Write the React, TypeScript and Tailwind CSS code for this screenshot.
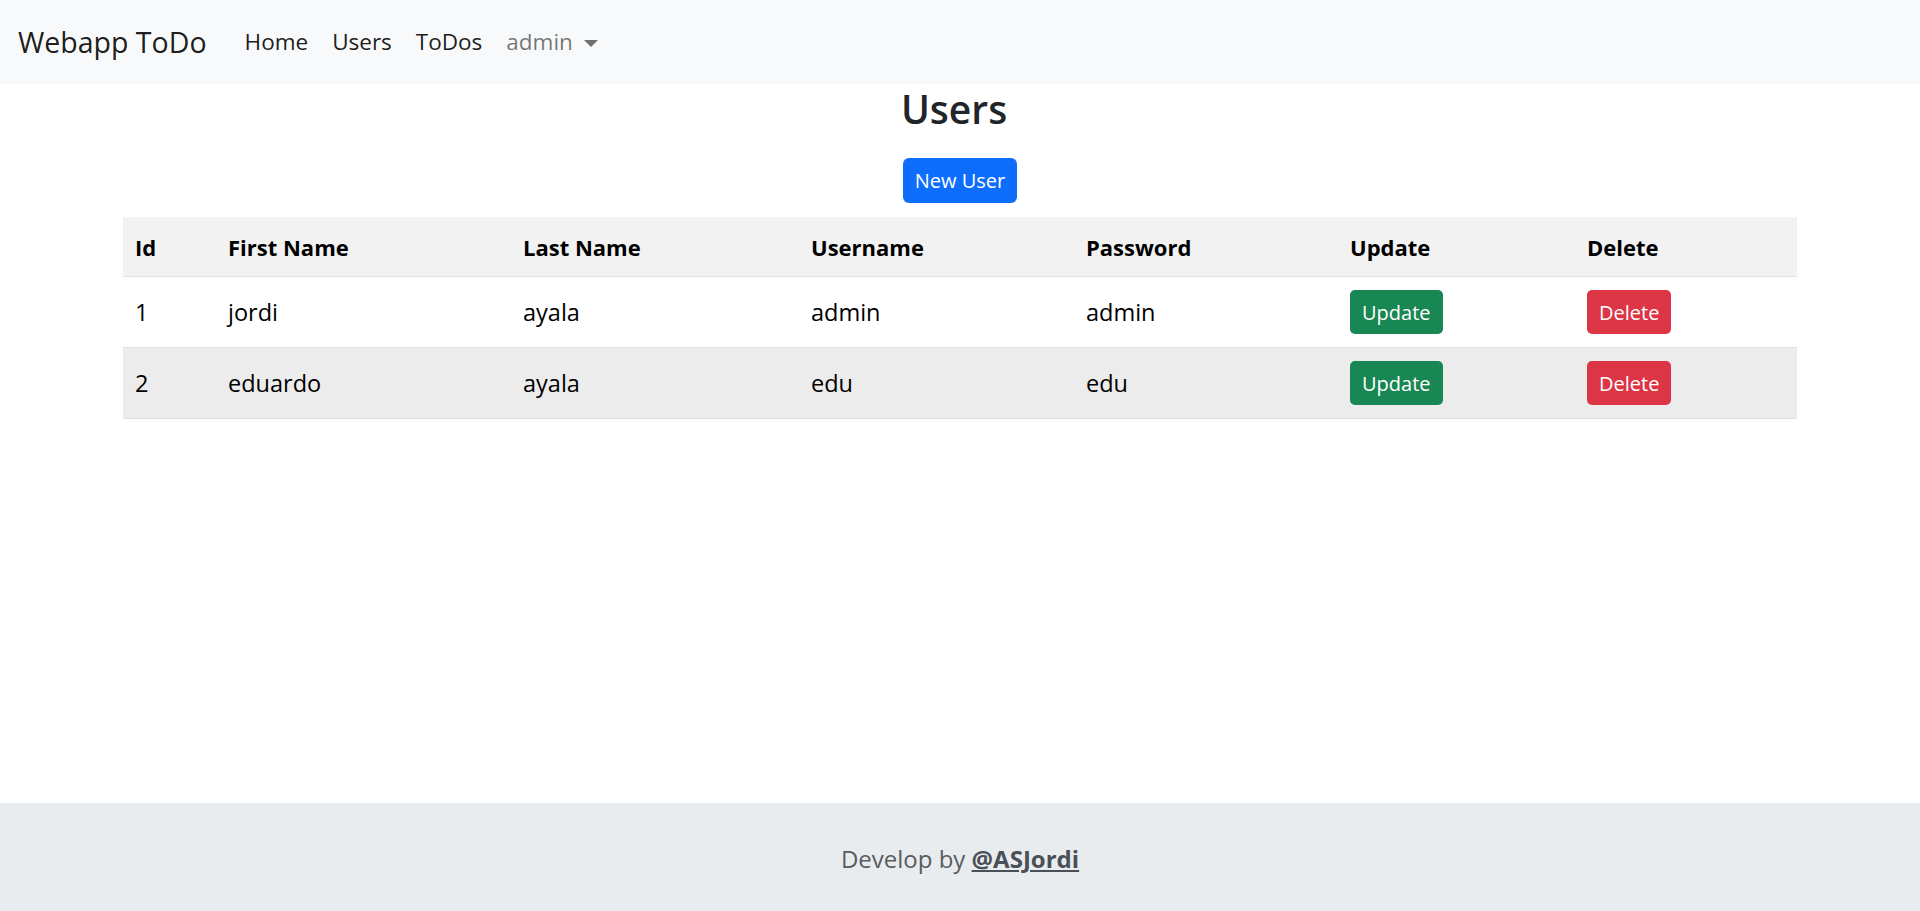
const users = [
  { id: 1, firstName: 'jordi', lastName: 'ayala', username: 'admin', password: 'admin' },
  { id: 2, firstName: 'eduardo', lastName: 'ayala', username: 'edu', password: 'edu' },
];

function Navbar() {
  return (
    <nav className="h-[84px] bg-[#f8f9fa] flex items-center px-[18px]">
      <a href="#" className="text-[28.5px] leading-[45px] text-black/90 mr-[26px]">
        Webapp ToDo
      </a>
      <ul className="flex items-center text-[22.5px] leading-[36px]">
        <li><a href="#" className="block px-[12px] text-black/90">Home</a></li>
        <li><a href="#" className="block px-[12px] text-black/90">Users</a></li>
        <li><a href="#" className="block px-[12px] text-black/90">ToDos</a></li>
        <li>
          <a href="#" className="flex items-center px-[12px] text-black/55">
            admin
            {/* dropdown caret */}
            <span className="ml-[11px] mt-[2px] w-0 h-0 border-t-[7px] border-t-current border-x-[7px] border-x-transparent" />
          </a>
        </li>
      </ul>
    </nav>
  );
}

function Btn({ color, children }: { color: string; children: string }) {
  return (
    <button className={`h-[44px] px-[12px] rounded-[5px] text-white text-[20px] leading-[31px] ${color}`}>
      {children}
    </button>
  );
}

export default function App() {
  return (
    <div className="min-h-screen flex flex-col bg-white font-['Open_Sans',sans-serif]">
      <Navbar />

      <main className="w-[1710px] mx-auto px-[18px]">
        <h3 className="text-center text-[39px] leading-[50px] font-semibold text-[#212529] mb-[24px] pr-[12px]">Users</h3>
        <div className="flex justify-center mb-[14px]">
          <button className="h-[45px] px-[12px] rounded-[6px] bg-[#0d6efd] text-white text-[20px] leading-[31px]">
            New User
          </button>
        </div>

        <table className="w-full table-fixed border-collapse text-[23.5px] leading-[36px] text-black">
          <thead>
            <tr className="bg-[#f2f2f2] border-b border-[#dee2e6] text-left text-[22px]">
              <th className="w-[93px] px-[12px] pt-[12px] pb-[11px] font-bold">Id</th>
              <th className="w-[295px] px-[12px] pt-[12px] pb-[11px] font-bold">First Name</th>
              <th className="w-[288px] px-[12px] pt-[12px] pb-[11px] font-bold">Last Name</th>
              <th className="w-[275px] px-[12px] pt-[12px] pb-[11px] font-bold">Username</th>
              <th className="w-[264px] px-[12px] pt-[12px] pb-[11px] font-bold">Password</th>
              <th className="w-[237px] px-[12px] pt-[12px] pb-[11px] font-bold">Update</th>
              <th className="px-[12px] pt-[12px] pb-[11px] font-bold">Delete</th>
            </tr>
          </thead>
          <tbody>
            {users.map((u, i) => (
              <tr key={u.id} className={`border-b border-[#dee2e6] ${i % 2 === 1 ? 'bg-[#ececec]' : 'bg-white'}`}>
                <td className="px-[12px] py-[13px] align-middle">{u.id}</td>
                <td className="px-[12px] py-[13px] align-middle">{u.firstName}</td>
                <td className="px-[12px] py-[13px] align-middle">{u.lastName}</td>
                <td className="px-[12px] py-[13px] align-middle">{u.username}</td>
                <td className="px-[12px] py-[13px] align-middle">{u.password}</td>
                <td className="px-[12px] py-[13px] align-middle">
                  <Btn color="bg-[#198754]">Update</Btn>
                </td>
                <td className="px-[12px] py-[13px] align-middle">
                  <Btn color="bg-[#dc3545]">Delete</Btn>
                </td>
              </tr>
            ))}
          </tbody>
        </table>
      </main>

      <footer className="mt-auto h-[108px] bg-[#e9ecef] flex items-center justify-center pt-[4px]">
        <p className="text-[24px] leading-[36px] text-[#595c5f]">
          Develop by{' '}
          <a href="#" className="font-bold underline text-[#495057]">@ASJordi</a>
        </p>
      </footer>
    </div>
  );
}
